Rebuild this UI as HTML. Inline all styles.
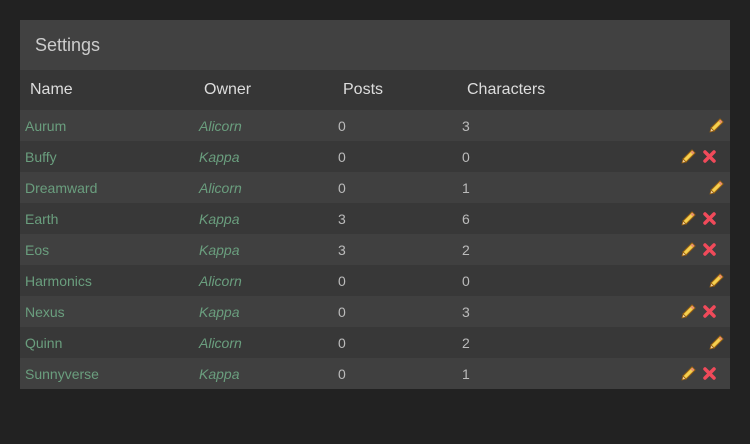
<!DOCTYPE html>
<html><head><style>
body{margin:0;background:#222;width:750px;height:444px;overflow:hidden;font-family:"Liberation Sans",sans-serif;}
.p{position:absolute;left:20px;top:20px;width:710px;height:369px;background:#3a3a3a;}
.t{height:50px;background:#414141;color:#ccc;font-size:18px;line-height:50px;padding-left:15px;}
.h{height:40px;background:#363636;color:#ddd;font-size:16px;position:relative;}
.h span{position:absolute;top:11px;}
.r{height:31px;position:relative;font-size:14px;}
.r:nth-child(odd){background:#404040;}
.r:nth-child(even){background:#383838;}
.r span{position:absolute;top:8px;}
.n{left:5px;color:#6a9e7e;}
.o{left:179px;color:#6a9e7e;font-style:italic;}
.a{left:318px;color:#bbb;}
.c{left:442px;color:#bbb;}
.i{position:absolute;top:6px;}
</style></head><body>
<div class="p">
<div class="t">Settings</div>
<div class="h"><span style="left:10px">Name</span><span style="left:184px">Owner</span><span style="left:323px">Posts</span><span style="left:447px">Characters</span></div>
<div id="rows"></div>
</div>
<svg width="0" height="0" style="position:absolute"><defs>
<g id="pen"><path d="M2 12 L11 3 L14 6 L5 15 Z" fill="#f5d050" stroke="#9a6210" stroke-width="1"/><path d="M2 12 L1 16 L5 15 Z" fill="#f0d0a0" stroke="#9a6210" stroke-width="0.8"/><path d="M10.5 4.5 L12.5 6.5" stroke="#e89070" stroke-width="2.5"/></g>
<g id="x"><path d="M3 3 L12 12 M12 3 L3 12" stroke="#f04a5a" stroke-width="3.5" stroke-linecap="round"/></g>
</defs></svg>
<script>
var d=[["Aurum","Alicorn",0,3,0],["Buffy","Kappa",0,0,1],["Dreamward","Alicorn",0,1,0],["Earth","Kappa",3,6,1],["Eos","Kappa",3,2,1],["Harmonics","Alicorn",0,0,0],["Nexus","Kappa",0,3,1],["Quinn","Alicorn",0,2,0],["Sunnyverse","Kappa",0,1,1]];
var h="";d.forEach(function(r){h+='<div class="r"><span class="n">'+r[0]+'</span><span class="o">'+r[1]+'</span><span class="a">'+r[2]+'</span><span class="c">'+r[3]+'</span>'+
(r[4]?'<svg class="i" style="left:661px" width="17" height="17"><use href="#pen"/></svg><svg class="i" style="left:682px;top:8px" width="15" height="15"><use href="#x"/></svg>':'<svg class="i" style="left:689px" width="17" height="17"><use href="#pen"/></svg>')+'</div>';});
document.getElementById("rows").innerHTML=h;
</script>
</body></html>
